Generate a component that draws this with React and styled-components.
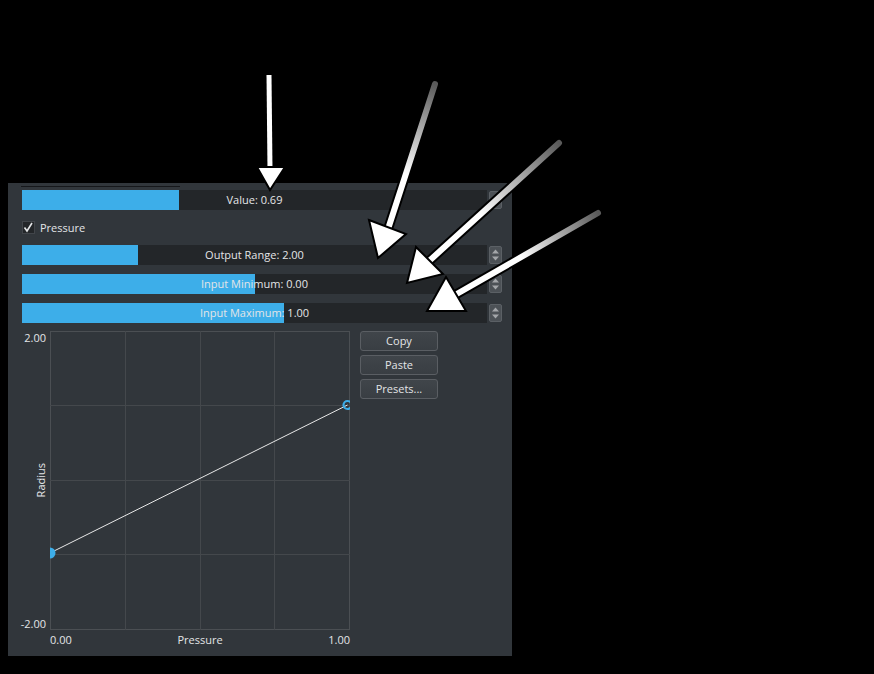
import styled, { createGlobalStyle } from "styled-components";

const GlobalStyle = createGlobalStyle`
  html, body {
    margin: 0;
    padding: 0;
    background: #000000;
  }
  body {
    font-family: "Open Sans", "Noto Sans", sans-serif;
    font-size: 11px;
    color: #e3e5e7;
  }
`;

const sliders = [
  { label: "Output Range", value: "2.00", fill: 116 },
  { label: "Input Minimum", value: "0.00", fill: 233 },
  { label: "Input Maximum", value: "1.00", fill: 262 },
];

function SpinBox() {
  return (
    <Spin>
      <svg width="9" height="14" viewBox="0 0 9 14">
        <path d="M4.5 1.5 L8 5.5 L1 5.5 Z" fill="#a3a6a9" />
        <path d="M4.5 12.5 L8 8.5 L1 8.5 Z" fill="#a3a6a9" />
      </svg>
    </Spin>
  );
}

function Slider({ label, value, fill }) {
  return (
    <SliderRow>
      <Track>
        <Fill style={{ width: fill }} />
        <TrackLabel>
          {label}: {value}
        </TrackLabel>
      </Track>
      <SpinBox />
    </SliderRow>
  );
}

function Arrows() {
  return (
    <Overlay width="874" height="674" viewBox="0 0 874 674">
      <defs>
        <linearGradient id="g2" gradientUnits="userSpaceOnUse" x1="435" y1="84" x2="405" y2="175">
          <stop offset="0" stopColor="#5a5a5a" />
          <stop offset="1" stopColor="#ffffff" />
        </linearGradient>
        <linearGradient id="g3" gradientUnits="userSpaceOnUse" x1="559" y1="143" x2="480" y2="215">
          <stop offset="0" stopColor="#5a5a5a" />
          <stop offset="1" stopColor="#ffffff" />
        </linearGradient>
        <linearGradient id="g4" gradientUnits="userSpaceOnUse" x1="598" y1="213" x2="520" y2="258">
          <stop offset="0" stopColor="#5a5a5a" />
          <stop offset="1" stopColor="#ffffff" />
        </linearGradient>
      </defs>

      <line x1="269" y1="75" x2="270" y2="170" stroke="#000" strokeWidth="8" />
      <line x1="269" y1="75" x2="270" y2="170" stroke="#fff" strokeWidth="5" />
      <polygon points="257,167 285,167 270,190" fill="#fff" stroke="#000" strokeWidth="2" />

      <line x1="435" y1="84" x2="389" y2="226" stroke="#000" strokeWidth="10" strokeLinecap="round" />
      <line x1="435" y1="84" x2="389" y2="226" stroke="url(#g2)" strokeWidth="6" strokeLinecap="round" />
      <polygon points="369,220 406,234 378,258" fill="#fff" stroke="#000" strokeWidth="2" />

      <line x1="559" y1="143" x2="428" y2="262" stroke="#000" strokeWidth="10" strokeLinecap="round" />
      <line x1="559" y1="143" x2="428" y2="262" stroke="url(#g3)" strokeWidth="6" strokeLinecap="round" />
      <polygon points="416,247 443,274 407,283" fill="#fff" stroke="#000" strokeWidth="2" />

      <line x1="598" y1="213" x2="455" y2="295" stroke="#000" strokeWidth="10" strokeLinecap="round" />
      <line x1="598" y1="213" x2="455" y2="295" stroke="url(#g4)" strokeWidth="6" strokeLinecap="round" />
      <polygon points="446,277 466,311 427,311" fill="#fff" stroke="#000" strokeWidth="2" />
    </Overlay>
  );
}

function CurvePlot() {
  return (
    <Plot width="300" height="299" viewBox="0 0 300 299">
      <rect x="0.5" y="0.5" width="299" height="298" fill="#31363b" stroke="#4b4f53" />
      {[75.5, 150.5, 224.5].map((x) => (
        <line key={x} x1={x} y1="0" x2={x} y2="299" stroke="#44484c" />
      ))}
      {[74.5, 149.5, 223.5].map((y) => (
        <line key={y} x1="0" y1={y} x2="300" y2={y} stroke="#44484c" />
      ))}
      <line x1="0" y1="222" x2="297.5" y2="74" stroke="#e8e8e8" strokeWidth="1" />
      <circle cx="0" cy="222" r="5.5" fill="#3daee9" />
      <circle cx="297.5" cy="74" r="4" fill="none" stroke="#3daee9" strokeWidth="2.2" />
    </Plot>
  );
}

export default function App() {
  return (
    <>
      <GlobalStyle />
      <Page>
        <Panel>
          <TopEdge />
          <Slider label="Value" value="0.69" fill={157} />
          <CheckRow>
            <CheckBox>
              <svg width="11" height="11" viewBox="0 0 11 11">
                <path d="M1.5 5.5 L4 9 L9 1" fill="none" stroke="#e3e5e7" strokeWidth="1.6" />
              </svg>
            </CheckBox>
            <span>Pressure</span>
          </CheckRow>
          <SliderStack>
            {sliders.map((s) => (
              <Slider key={s.label} {...s} />
            ))}
          </SliderStack>
          <CurveArea>
            <AxisColumn>
              <AxisValue>2.00</AxisValue>
              <AxisTitle>Radius</AxisTitle>
              <AxisValue>-2.00</AxisValue>
            </AxisColumn>
            <PlotColumn>
              <CurvePlot />
              <XLabels>
                <span>0.00</span>
                <span>Pressure</span>
                <span>1.00</span>
              </XLabels>
            </PlotColumn>
            <ButtonColumn>
              <Button>Copy</Button>
              <Button>Paste</Button>
              <Button>Presets...</Button>
            </ButtonColumn>
          </CurveArea>
        </Panel>
        <Arrows />
      </Page>
    </>
  );
}

const Page = styled.div`
  position: relative;
  width: 874px;
  height: 674px;
  box-sizing: border-box;
  padding: 183px 0 0 8px;
  background: #000;
`;

const Panel = styled.div`
  width: 504px;
  height: 473px;
  box-sizing: border-box;
  background: #31363b;
  padding: 0 10px 0 14px;
  display: flex;
  flex-direction: column;
`;

const TopEdge = styled.div`
  height: 7px;
  margin-left: -1px;
  box-sizing: border-box;
  border-top: 3px solid #31363b;
  &::before {
    content: "";
    display: block;
    width: 159px;
    height: 1px;
    background: #15171a;
  }
`;

const SliderRow = styled.div`
  display: flex;
  align-items: center;
  gap: 2px;
  height: 20px;
`;

const Track = styled.div`
  position: relative;
  flex: 1;
  height: 20px;
  background: #232629;
  display: flex;
  align-items: center;
  justify-content: center;
  overflow: hidden;
`;

const Fill = styled.div`
  position: absolute;
  left: 0;
  top: 0;
  bottom: 0;
  background: #3daee9;
`;

const TrackLabel = styled.span`
  position: relative;
  line-height: 20px;
  white-space: nowrap;
`;

const Spin = styled.div`
  width: 13px;
  height: 18px;
  box-sizing: border-box;
  border: 1px solid #5b6065;
  border-radius: 2px;
  background: #4c5156;
  display: flex;
  align-items: center;
  justify-content: center;
`;

const CheckRow = styled.div`
  display: flex;
  align-items: center;
  gap: 5px;
  height: 18px;
  margin: 8px 0 9px;
`;

const CheckBox = styled.div`
  width: 13px;
  height: 13px;
  box-sizing: border-box;
  background: #232629;
  border: 1px solid #41454a;
  display: flex;
  align-items: center;
  justify-content: center;
`;

const SliderStack = styled.div`
  display: flex;
  flex-direction: column;
  gap: 9px;
`;

const CurveArea = styled.div`
  display: flex;
  align-items: flex-start;
  margin-top: 8px;
`;

const AxisColumn = styled.div`
  width: 28px;
  height: 299px;
  display: flex;
  flex-direction: column;
  justify-content: space-between;
  align-items: flex-end;
`;

const AxisValue = styled.span`
  padding-right: 4px;
  line-height: 13px;
`;

const AxisTitle = styled.span`
  writing-mode: vertical-rl;
  transform: rotate(180deg);
  line-height: 14px;
  margin-right: 2px;
`;

const PlotColumn = styled.div`
  width: 300px;
  display: flex;
  flex-direction: column;
`;

const Plot = styled.svg`
  display: block;
  overflow: hidden;
`;

const XLabels = styled.div`
  display: flex;
  justify-content: space-between;
  margin-top: 2px;
  line-height: 16px;
`;

const ButtonColumn = styled.div`
  margin-left: 10px;
  width: 78px;
  display: flex;
  flex-direction: column;
  gap: 4px;
`;

const Button = styled.button`
  height: 20px;
  padding: 0;
  box-sizing: border-box;
  border: 1px solid #5a5e63;
  border-radius: 3px;
  background: linear-gradient(#40454a, #393e43);
  color: #e3e5e7;
  font-family: inherit;
  font-size: 11px;
  line-height: 18px;
`;

const Overlay = styled.svg`
  position: absolute;
  left: 0;
  top: 0;
  pointer-events: none;
`;
